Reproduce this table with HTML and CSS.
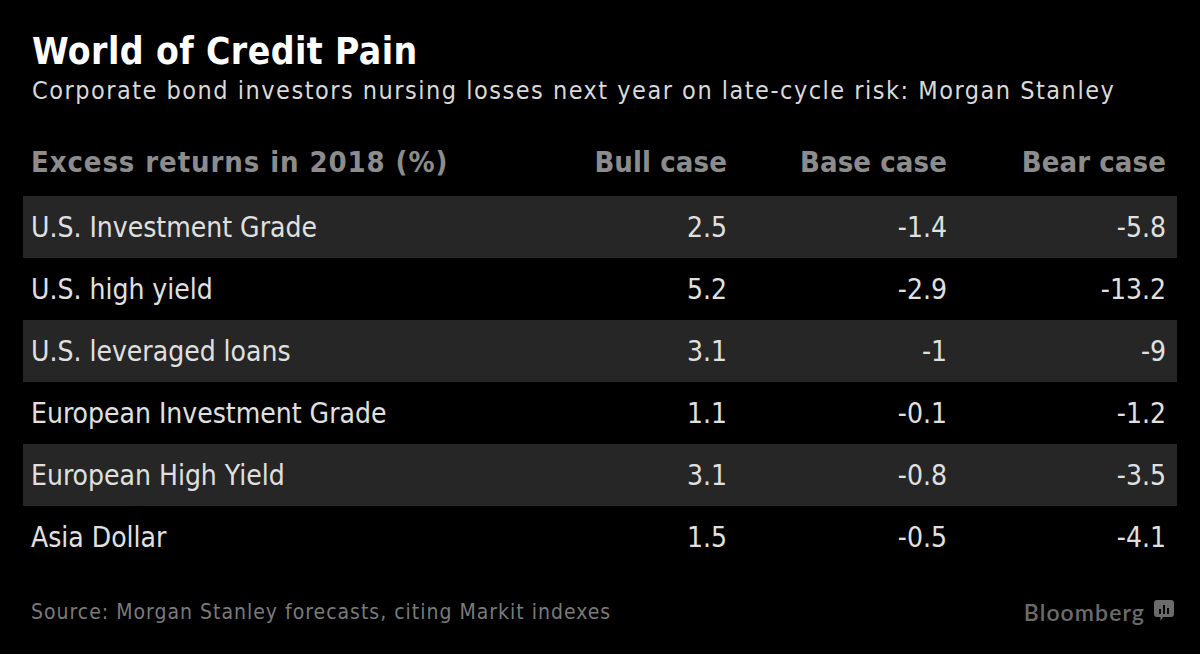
FILE: index.html
```html
<!DOCTYPE html>
<html lang="en">
<head>
<meta charset="utf-8">
<title>World of Credit Pain</title>
<link rel="stylesheet" href="styles.css">
</head>
<body>
<main class="chart">
  <h1 class="title">World of Credit Pain</h1>
  <p class="subtitle">Corporate bond investors nursing losses next year on late-cycle risk: Morgan Stanley</p>
  <div class="table">
    <div class="row head">
      <div class="cell label">Excess returns in 2018 (%)</div>
      <div class="cell num">Bull case</div>
      <div class="cell num">Base case</div>
      <div class="cell num last">Bear case</div>
    </div>
    <div class="row shaded">
      <div class="cell label">U.S. Investment Grade</div>
      <div class="cell num">2.5</div>
      <div class="cell num">-1.4</div>
      <div class="cell num last">-5.8</div>
    </div>
    <div class="row">
      <div class="cell label">U.S. high yield</div>
      <div class="cell num">5.2</div>
      <div class="cell num">-2.9</div>
      <div class="cell num last">-13.2</div>
    </div>
    <div class="row shaded">
      <div class="cell label">U.S. leveraged loans</div>
      <div class="cell num">3.1</div>
      <div class="cell num">-1</div>
      <div class="cell num last">-9</div>
    </div>
    <div class="row">
      <div class="cell label">European Investment Grade</div>
      <div class="cell num">1.1</div>
      <div class="cell num">-0.1</div>
      <div class="cell num last">-1.2</div>
    </div>
    <div class="row shaded">
      <div class="cell label">European High Yield</div>
      <div class="cell num">3.1</div>
      <div class="cell num">-0.8</div>
      <div class="cell num last">-3.5</div>
    </div>
    <div class="row">
      <div class="cell label">Asia Dollar</div>
      <div class="cell num">1.5</div>
      <div class="cell num">-0.5</div>
      <div class="cell num last">-4.1</div>
    </div>
  </div>
  <footer class="footer">
    <span class="source">Source: Morgan Stanley forecasts, citing Markit indexes</span>
    <span class="brand">
      <span class="brand-name">Bloomberg</span>
      <svg class="brand-icon" width="20" height="22" viewBox="0 0 20 22" aria-hidden="true">
        <path d="M3 0 H17 A3 3 0 0 1 20 3 V14 A3 3 0 0 1 17 17 H9 L6.5 21 L6.5 17 H3 A3 3 0 0 1 0 14 V3 A3 3 0 0 1 3 0 Z" fill="#6b6b6b"/>
        <rect x="5" y="9" width="2" height="5" fill="#000"/>
        <rect x="9" y="5" width="2" height="9" fill="#000"/>
        <rect x="13" y="8" width="2" height="6" fill="#000"/>
      </svg>
    </span>
  </footer>
</main>
</body>
</html>
```
FILE: styles.css
```css
html, body {
  margin: 0;
  padding: 0;
  background: #000;
}
body {
  width: 1200px;
  height: 654px;
  overflow: hidden;
  font-family: "DejaVu Sans Condensed", "DejaVu Sans", sans-serif;
  font-stretch: condensed;
}
.chart {
  padding: 30px 23px 0 23px;
}
.title {
  margin: 0 0 0 9px;
  font-size: 37px;
  line-height: 44px;
  font-weight: bold;
  letter-spacing: 0.4px;
  color: #fff;
}
.subtitle {
  margin: 2px 0 0 9px;
  font-size: 25px;
  line-height: 30px;
  letter-spacing: 1.5px;
  color: #d9d9d9;
}
.table {
  margin-top: 25px;
  width: 1154px;
}
.row {
  display: grid;
  grid-template-columns: 1fr 220px 220px 219px;
  height: 62px;
  align-items: center;
  padding: 0 11px 0 8px;
  font-size: 28px;
  color: #e0e0e0;
}
.row.head {
  height: 62px;
  margin-bottom: 3px;
  font-size: 29px;
  font-weight: bold;
  color: #8c8c8c;
}
.row.head .label {
  letter-spacing: 0.9px;
}
.row.head .num {
  letter-spacing: 0.1px;
}
.row.shaded {
  background: #262626;
}
.cell {
  white-space: nowrap;
}
.num {
  text-align: right;
}
.footer {
  margin-top: 28px;
  display: flex;
  justify-content: space-between;
  align-items: center;
  padding: 0 3px 0 8px;
  height: 32px;
}
.source {
  font-size: 21px;
  letter-spacing: 1px;
  color: #7a7a7a;
}
.brand {
  display: flex;
  align-items: flex-start;
  gap: 9px;
}
.brand-name {
  font-family: "Lato", "Open Sans", sans-serif;
  font-weight: 600;
  font-size: 23px;
  letter-spacing: 1.1px;
  color: #6b6b6b;
  font-stretch: normal;
}
.brand-icon {
  display: block;
  margin-top: 2px;
}
```
